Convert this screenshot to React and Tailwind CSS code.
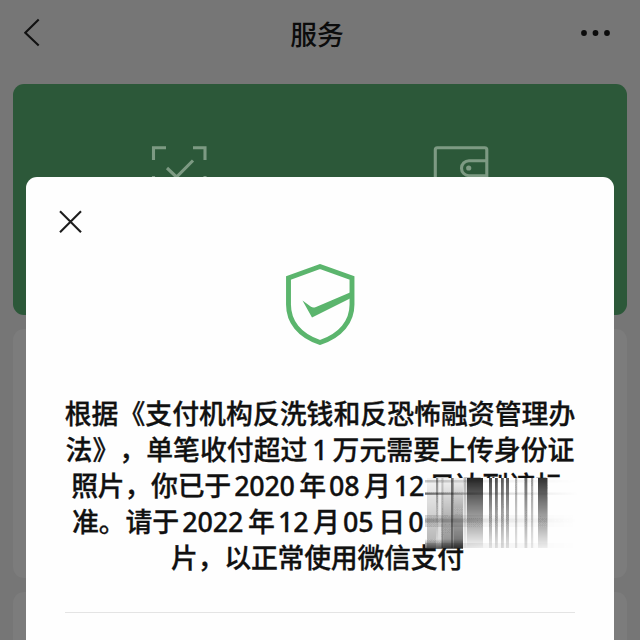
import clsx from "clsx";

// vertical streaks of the smudge: x, width, opacity at the top, opacity at the bottom
const STREAKS = [
  [427, 9, 0.04, 0.3],
  [436, 2.2, 0.5, 0.12],
  [438.2, 4, 0.05, 0.15],
  [441.5, 2, 0.2, 0.55],
  [443.5, 7.5, 0.04, 0.5],
  [451, 2.6, 0.6, 0.65],
  [453.8, 9.2, 0.05, 0.65],
  [463.5, 3, 0.3, 0.05],
  [467, 16, 0.9, 0.03],
  [489, 3, 0.75, 0.08],
  [495, 2.8, 0.75, 0.1],
  [501, 2.8, 0.7, 0.12],
  [506, 3, 0.7, 0.1],
  [515, 2.2, 0.35, 0.1],
  [524.5, 2.8, 0.65, 0.12],
  [531, 2.2, 0.4, 0.08],
  [538, 9.5, 0.85, 0.05],
];

// horizontal streaks: y, height, opacity at the left
const SMEARS = [
  [480, 2.5, 0.22],
  [492.5, 2.3, 0.6],
  [515, 12, 0.15],
  [518.5, 4, 0.25],
  [543, 5, 0.15],
];

function Num({ children, wide = false }) {
  return (
    <span className={clsx("font-['Noto_Sans'] leading-none", wide ? "px-[4.9px]" : "pl-[3.2px] pr-[4.6px]")}>
      {children}
    </span>
  );
}

function Smudge() {
  return (
    <svg
      className="absolute left-[399px] top-[301px]"
      width="155"
      height="72"
      viewBox="425 478 155 72"
      aria-hidden="true"
    >
      <defs>
        {STREAKS.map(([x, , top, bottom]) => (
          <linearGradient key={x} id={`streak-${x}`} x1="0" y1="0" x2="0" y2="1">
            <stop offset="0" stopColor="#111" stopOpacity={top} />
            <stop offset="1" stopColor="#111" stopOpacity={bottom} />
          </linearGradient>
        ))}
        {SMEARS.map(([y, , left]) => (
          <linearGradient key={y} id={`smear-${y}`} x1="0" y1="0" x2="1" y2="0">
            <stop offset="0" stopColor="#111" stopOpacity={left} />
            <stop offset="0.4" stopColor="#111" stopOpacity={left / 4} />
            <stop offset="1" stopColor="#111" stopOpacity="0" />
          </linearGradient>
        ))}
        <linearGradient id="foot" x1="0" y1="0" x2="0" y2="1">
          <stop offset="0" stopColor="#111" stopOpacity="0" />
          <stop offset="1" stopColor="#111" stopOpacity="0.65" />
        </linearGradient>
        <filter id="soft" x="-5%" y="-5%" width="110%" height="110%">
          <feGaussianBlur stdDeviation="0.7 0.7" />
        </filter>
      </defs>
      <rect x="425" y="478" width="155" height="70" fill="#fefefe" />
      <g filter="url(#soft)">
        {STREAKS.map(([x, w]) => (
          <rect key={x} x={x} y="478" width={w} height="70" fill={`url(#streak-${x})`} />
        ))}
        {SMEARS.map(([y, h]) => (
          <rect key={y} x="425" y={y} width="153" height={h} fill={`url(#smear-${y})`} />
        ))}
        <rect x="425" y="539" width="38" height="10" fill="url(#foot)" />
      </g>
    </svg>
  );
}

function Header() {
  return (
    <header className="flex h-[84px] items-start justify-between px-6 pt-[14px]">
      <svg width="38" height="38" viewBox="24 14 38 38" fill="none" stroke="#111" strokeWidth="2.1">
        <path d="M38.7 19.5 25.3 32.7l13.4 12.8" />
      </svg>
      <h1 className="-ml-[6px] text-[26.8px] font-medium leading-[39px] text-[#0c0c0c]">服务</h1>
      <svg width="38" height="38" viewBox="578 14 38 38" fill="#0c0c0c">
        <circle cx="584" cy="33" r="2.9" />
        <circle cx="595.5" cy="33" r="2.9" />
        <circle cx="607" cy="33" r="2.9" />
      </svg>
    </header>
  );
}

function Notice() {
  return (
    <section className="absolute left-[26px] top-[177px] h-[463px] w-[588px] rounded-t-[11px] bg-[#fefefe]">
      <button className="ml-[32px] mt-[32px] block" aria-label="关闭">
        <svg width="26" height="26" viewBox="0 0 26 26" fill="none" stroke="#1c1c1c" strokeWidth="2.1">
          <path d="M2 2.3 23 23.3M23 2.3 2 23.3" />
        </svg>
      </button>
      <svg className="mx-auto mt-[27px] block" width="76" height="86" viewBox="282 262 76 86">
        <path
          d="M320 266.5 352 278v26.5c0 17-11 31-32 38-21-7-31.5-21-31.5-38V278Z"
          fill="none"
          stroke="#5bb56d"
          strokeWidth="4.9"
        />
        <path d="M302.5 300.5 311 306.7c1.5 1 3 .9 5 .2L350 292.5l2 1.5-1 4-39 19.5Z" fill="#5bb56d" />
      </svg>
      <div className="mt-[46.5px] flex flex-col items-center whitespace-pre text-[26.88px] font-medium leading-[36px] text-[#111] [text-spacing-trim:space-all] [-webkit-text-stroke:0.3px_#111]">
        <p className="h-9">根据《支付机构反洗钱和反恐怖融资管理办</p>
        <p className="h-9">
          法》，单笔收付超过<Num wide>1</Num>万元需要上传身份证
        </p>
        <p className="-ml-[7px] h-9 tracking-[-0.25px]">
          照片，你已于<Num>2020</Num>年<Num>08</Num>月<Num>12</Num>日达到该标
        </p>
        <p className="h-9 w-[496px] tracking-[-0.1px]">
          准。请于<Num>2022</Num>年<Num>12</Num>月<Num>05</Num>日<Num>0</Num>
        </p>
        <p className="-ml-[5px] h-9 tracking-[-0.25px]">片，以正常使用微信支付</p>
      </div>
      <hr className="mx-[39px] mt-[37px] border-[#e4e4e4]" />
      <Smudge />
    </section>
  );
}

export default function App() {
  return (
    <main className="relative h-[640px] w-[640px] overflow-hidden bg-[#767676] font-['Noto_Sans_CJK_SC','Noto_Sans',sans-serif]">
      <Header />
      <div className="mx-[13px] flex flex-col">
        <div className="grid h-[231px] grid-cols-[332px_1fr] items-start rounded-[11px] bg-[#2c5839] pt-[60px]">
          <svg className="mx-auto" width="60" height="60" viewBox="149 144 60 60" fill="none" stroke="#7d9a83" strokeWidth="3.1">
            <path d="M153.5 160v-12.2H166M193 147.8h12V160M153.5 176v12.2H166M193 188.2h12V176" />
            <path d="M167 168 176.5 177 193 160.5" />
          </svg>
          <svg className="ml-[86px]" width="60" height="60" viewBox="431 144 60 60" fill="none" stroke="#7d9a83" strokeWidth="3.1">
            <rect x="435.3" y="147.8" width="51.5" height="44" rx="2" />
            <path d="M487 160.7H469a7.5 7.5 0 0 0 0 15h18" />
            <circle cx="468.7" cy="168" r="2.6" fill="#7d9a83" stroke="none" />
          </svg>
        </div>
        <div className="mt-[14px] h-[249px] rounded-[11px] bg-[#7c7c7c]" />
        <div className="mt-[14px] h-[80px] rounded-[11px] bg-[#7c7c7c]" />
      </div>
      <Notice />
    </main>
  );
}
